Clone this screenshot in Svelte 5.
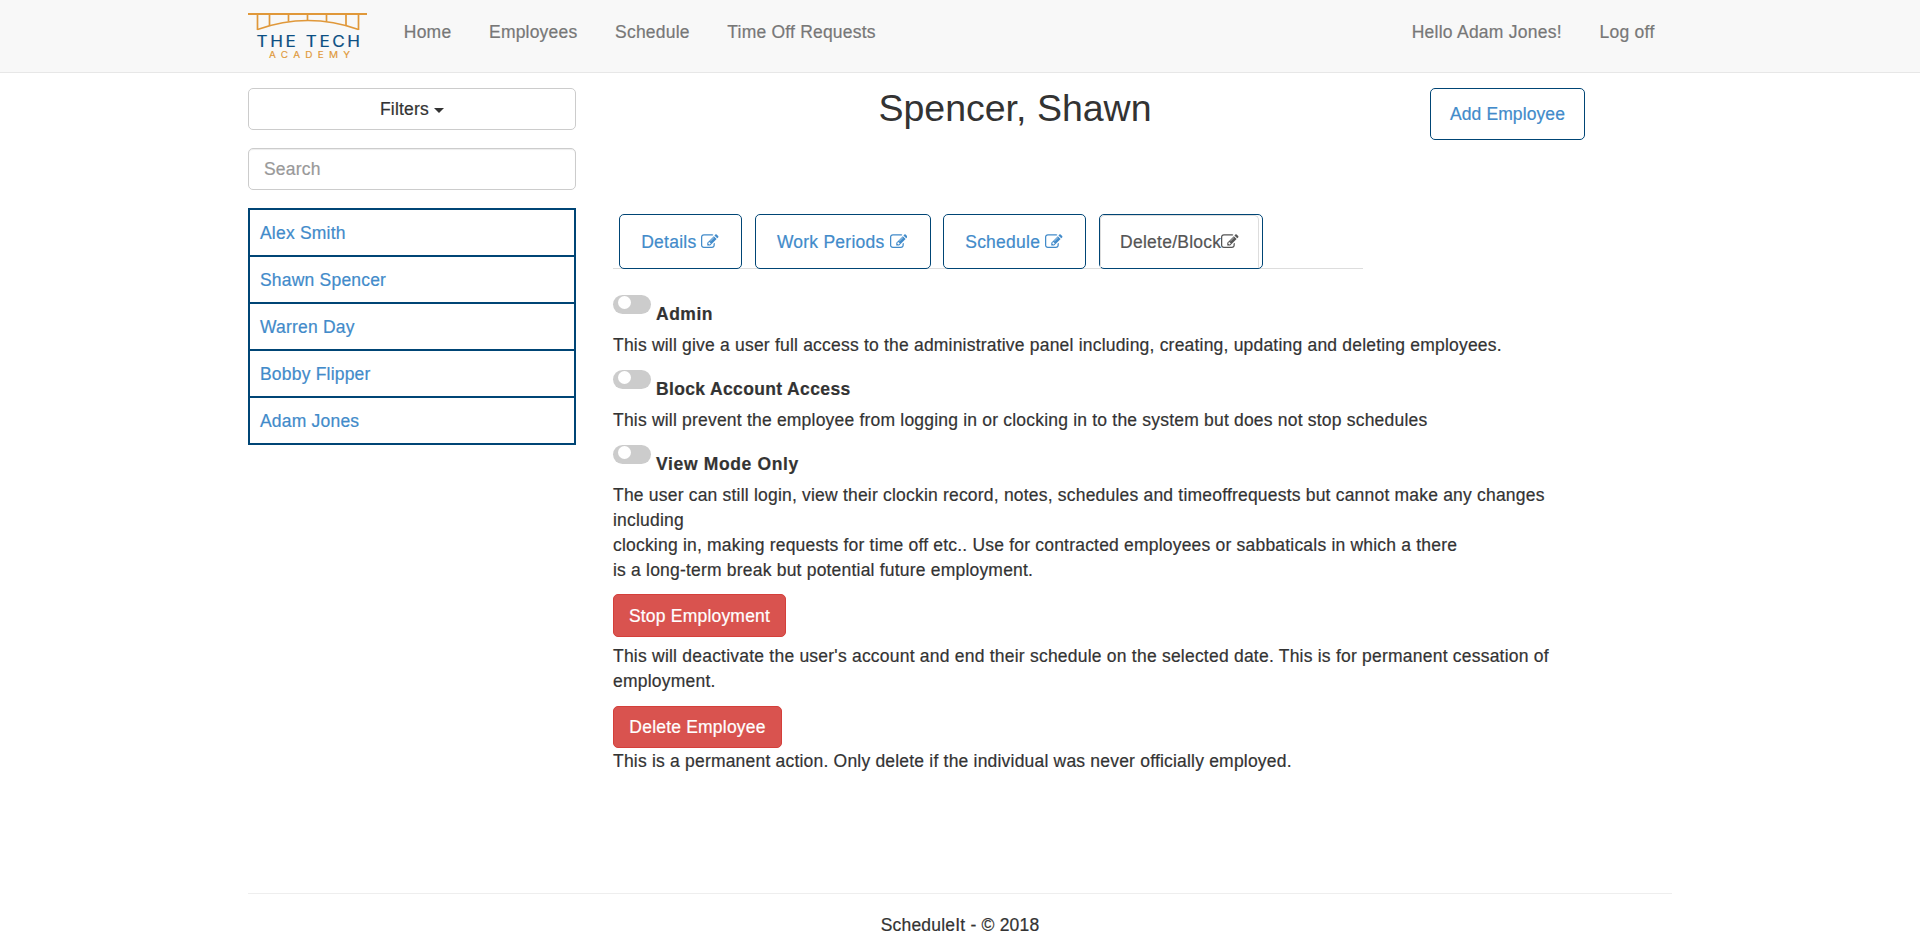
<script>
  const navLinks = ['Home', 'Employees', 'Schedule', 'Time Off Requests'];
  const userLinks = ['Hello Adam Jones!', 'Log off'];
  const employees = ['Alex Smith', 'Shawn Spencer', 'Warren Day', 'Bobby Flipper', 'Adam Jones'];
  const tabs = [
    { label: 'Details ', width: 123.2 },
    { label: 'Work Periods ', width: 175.6 },
    { label: 'Schedule ', width: 143.4 },
    { label: 'Delete/Block', width: 164, active: true }
  ];
</script>

{#snippet pencil()}
  <svg class="pencil" viewBox="0 0 1792 1792"><path fill="currentColor" d="M888 1184l116-116-152-152-116 116v56h96v96h56zm440-720q-16-16-33 1l-350 350q-17 17-1 33t33-1l350-350q17-17 1-33zm80 594v190q0 119-84.500 203.500t-203.500 84.500h-832q-119 0-203.500-84.500t-84.500-203.500v-832q0-119 84.500-203.500t203.500-84.500h832q63 0 117 25 15 7 18 23 3 17-9 29l-49 49q-14 14-32 8-23-6-45-6h-832q-66 0-113 47t-47 113v832q0 66 47 113t113 47h832q66 0 113-47t47-113v-126q0-13 9-22l64-64q15-15 35-7t20 29zm-96-738l288 288-672 672h-288v-288zm444 132l-92 92-288-288 92-92q28-28 68-28t68 28l152 152q28 28 28 68t-28 68z" /></svg>
{/snippet}

{#snippet toggle(label, spacing)}
  <div class="toggle-row">
    <span class="switch"><span class="knob"></span></span>
    <strong style:letter-spacing="{spacing}px">{label}</strong>
  </div>
{/snippet}

<nav class="navbar">
  <div class="container nav-inner">
    <svg class="logo" viewBox="0 0 120 48" width="120" height="48">
      <g fill="none" stroke="#e0983a">
        <path d="M0 2h119" stroke-width="2" />
        <path d="M9.500 3v15M21.500 3v10.500M40.500 3v6.500M59.500 3v5M78.500 3v6.500M98 3v10.500M110.500 3v15" stroke-width="1.700" />
        <path d="M9.500 17.500Q60 -.5 110.500 17.500" stroke-width="1.600" />
      </g>
      <text transform="translate(8.500 35) scale(1.120 1)" textLength="92.500" font-size="15.300" fill="#0b4f83" stroke="#0b4f83" stroke-width="0.200">THE TECH</text>
      <text transform="translate(21 46) scale(1.150 1)" textLength="70.500" font-size="8.700" fill="#e0983a" stroke="#e0983a" stroke-width="0.150">ACADEMY</text>
    </svg>
    <ul class="links">
      {#each navLinks as link}<li>{link}</li>{/each}
    </ul>
    <ul class="links right">
      {#each userLinks as link}<li>{link}</li>{/each}
    </ul>
  </div>
</nav>

<div class="container body">
  <aside>
    <button class="filters">Filters <span class="caret"></span></button>
    <input class="search" type="text" placeholder="Search" />
    <ul class="people">
      {#each employees as name}<li>{name}</li>{/each}
    </ul>
  </aside>

  <main>
    <header>
      <h2>Spencer, Shawn</h2>
      <button class="add">Add Employee</button>
    </header>

    <ul class="tabs">
      {#each tabs as tab}
        <li class:active={tab.active} style:width="{tab.width}px"><span class="tab">{tab.label}{@render pencil()}</span></li>
      {/each}
    </ul>

    <section>
      {@render toggle('Admin', 0.5)}
      <p>This will give a user full access to the administrative panel including, creating, updating and deleting employees.</p>
      {@render toggle('Block Account Access', 0.36)}
      <p>This will prevent the employee from logging in or clocking in to the system but does not stop schedules</p>
      {@render toggle('View Mode Only', 0.65)}
      <p>
        The user can still login, view their clockin record, notes, schedules and timeoffrequests but cannot make any changes including<br />
        clocking in, making requests for time off etc.. Use for contracted employees or sabbaticals in which a there<br />
        is a long-term break but potential future employment.
      </p>
      <button class="danger stop">Stop Employment</button>
      <p class="note">This will deactivate the user's account and end their schedule on the selected date. This is for permanent cessation of employment.</p>
      <button class="danger delete">Delete Employee</button>
      <p>This is a permanent action. Only delete if the individual was never officially employed.</p>
    </section>
  </main>
</div>

<footer class="container"><div>ScheduleIt - © 2018</div></footer>

<style>
  :global(body) {
    background: #fff;
    color: #333;
    font: 17.5px/25px 'Liberation Sans', Arial, sans-serif;
    letter-spacing: 0.2px;
    -webkit-text-stroke: 0.2px;
  }
  :global(*) { box-sizing: border-box; }
  ul { list-style: none; margin: 0; padding: 0; }
  p { margin: 0 0 12px; padding-top: 1px; }
  button, input { font: inherit; color: inherit; background: #fff; letter-spacing: inherit; }
  .container { width: 1424px; margin: 0 auto; }

  .navbar { height: 73px; background: #f8f8f8; border-bottom: 1px solid #e7e7e7; }
  .nav-inner { display: flex; align-items: flex-start; }
  .logo { margin: 12px 17px 0 0; flex: none; font-family: Inter, sans-serif; letter-spacing: 0; -webkit-text-stroke: initial; }
  .links { display: flex; color: #777; }
  .links li { padding: 20px 18.85px 0; white-space: nowrap; }
  .right { margin-left: auto; letter-spacing: 0.25px; }
  .right li:last-child { padding-right: 17.5px; }

  .body { display: grid; grid-template-columns: 328px 1fr; column-gap: 37px; padding-top: 15px; height: 820px; }
  aside { display: flex; flex-direction: column; }
  .filters { height: 42px; border: 1px solid #ccc; border-radius: 5px; padding: 0; display: flex; align-items: center; justify-content: center; gap: 5px; }
  .caret { border: 5px solid transparent; border-top-color: #333; border-bottom: 0; margin-top: 3px; }
  .search { width: 100%; height: 42px; margin: 18px 0; padding: 0 15px; border: 1px solid #ccc; border-radius: 5px; box-shadow: inset 0 1px 1px rgba(0, 0, 0, 0.075); }
  .search::placeholder { color: #999; opacity: 1; }
  .people { border: 2px solid #004575; color: #428bca; }
  .people li { height: 47px; padding: 11px 10px 9px; border-bottom: 2px solid #004575; }
  .people li:last-child { height: 45px; border-bottom: 0; }

  header { display: grid; grid-template-columns: 803px 155px; column-gap: 14px; height: 126px; align-items: start; }
  h2 { margin: 0; padding-left: 1px; font-weight: 400; font-size: 37.5px; line-height: 41px; text-align: center; letter-spacing: 0; -webkit-text-stroke: 0; }
  .add { height: 52px; padding: 0; border: 1px solid #004575; border-radius: 5px; color: #428bca; letter-spacing: 0.1px; }

  .tabs { display: flex; gap: 12.5px; width: 750px; height: 55px; padding-left: 6.25px; border-bottom: 1px solid #ddd; letter-spacing: 0.24px; }
  .tabs li { height: 55px; flex: none; border: 1px solid #004575; border-radius: 5px; color: #428bca; text-align: center; white-space: pre; }
  .tab { display: block; padding: 15px 1.5px 0 0; height: 53px; }
  .active .tab { margin-right: 3px; border: 1px solid #ddd; border-bottom-color: transparent; border-radius: 5px 5px 0 0; color: #555; padding: 14px 0 0; }
  .pencil { width: 17.5px; height: 17.5px; vertical-align: -2px; }

  section { width: 950px; padding-top: 26px; }
  .toggle-row { display: flex; gap: 5px; height: 37px; }
  .switch { width: 38px; height: 19px; border-radius: 10px; background: #ccc; padding: 1px 5px; }
  .knob { display: block; width: 13px; height: 13px; border-radius: 50%; background: #fff; }
  strong { padding-top: 7px; }
  .note { letter-spacing: 0.22px; }
  .danger { display: block; padding: 0; color: #fff; background: #d9534f; border: 1px solid #d43f3a; border-radius: 5px; }
  .stop { width: 173px; height: 43px; margin: -1px 0 6px; padding-top: 1px; }
  .delete { width: 169px; height: 42px; }

  footer div { border-top: 1px solid #eee; padding-top: 19px; text-align: center; }
</style>
